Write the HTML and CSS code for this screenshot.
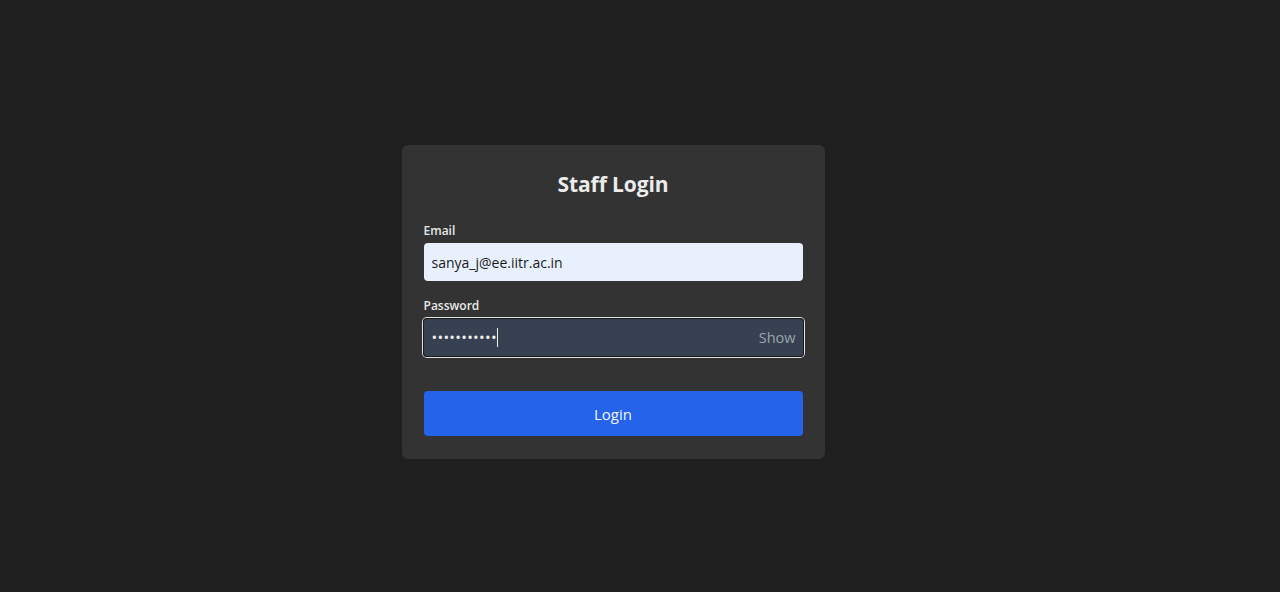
FILE: index.html
```html
<!DOCTYPE html>
<html lang="en">
<head>
<meta charset="utf-8">
<title>Staff Login</title>
<link rel="stylesheet" href="styles.css">
</head>
<body>
<main class="page">
  <form class="card">
    <h1 class="title">Staff Login</h1>
    <label class="label" for="email">Email</label>
    <input class="input input-email" id="email" type="text" value="sanya_j@ee.iitr.ac.in">
    <label class="label label-pw" for="pw">Password</label>
    <div class="pw-field">
      <span class="pw-dots">•••••••••••</span><span class="caret"></span>
      <span class="show">Show</span>
    </div>
    <button class="btn" type="button">Login</button>
  </form>
</main>
</body>
</html>
```
FILE: styles.css
```css
* { box-sizing: border-box; }
html, body { margin: 0; height: 100%; }
body {
  background: #1f1f1f;
  font-family: "Open Sans", "Noto Sans", sans-serif;
  color: #e5e5e5;
}
.page {
  height: 592px;
  display: flex;
  justify-content: center;
  padding-top: 145px;
  padding-right: 54px;
}
.card {
  width: 423px;
  height: 314px;
  background: #333333;
  border-radius: 6px;
  padding: 24px 22px 22px;
  display: flex;
  flex-direction: column;
}
.title {
  margin: 0 0 24px;
  font-size: 21px;
  line-height: 30px;
  font-weight: 700;
  text-align: center;
  color: #ececec;
  letter-spacing: -0.1px;
}
.label {
  font-size: 12px;
  line-height: 16px;
  font-weight: 600;
  color: #e8e8e8;
  margin-bottom: 4px;
}
.label-pw { margin-top: 17px; }
.input {
  height: 38px;
  border: none;
  border-radius: 4px;
  padding: 0 8px;
  font: inherit;
  font-size: 14px;
}
.input-email {
  background: #e8f0fe;
  color: #1a1a1a;
  outline: none;
}
.pw-field {
  height: 39px;
  margin: 0 -1px;
  border-radius: 4px;
  background: #374151;
  box-shadow: inset 0 0 0 1px #1a1a1a, 0 0 0 1px #e2e2e2;
  display: flex;
  align-items: center;
  padding: 0 8px 0 9px;
}
.pw-dots {
  font-size: 15px;
  letter-spacing: 0.3px;
  color: #f0f0f0;
  line-height: 1;
}
.caret {
  width: 1px;
  height: 19px;
  background: #f0f0f0;
  margin-left: 0;
}
.show {
  margin-left: auto;
  font-size: 14.5px;
  color: #9ca3af;
}
.btn {
  margin-top: 34px;
  height: 45px;
  border: none;
  border-radius: 4px;
  background: #2563eb;
  color: #f2f6ff;
  font: inherit;
  font-size: 15px;
}
```
